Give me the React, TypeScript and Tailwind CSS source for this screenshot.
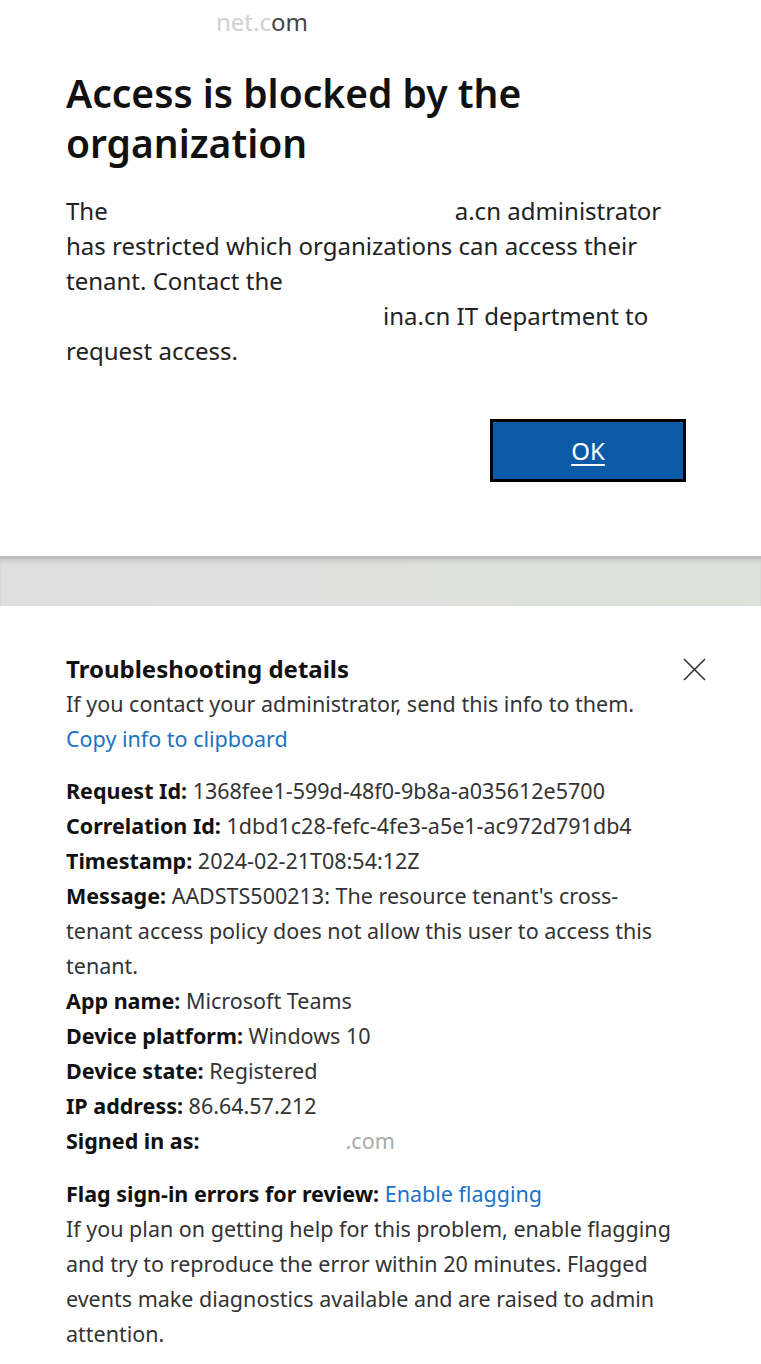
function Redacted({ w }: { w: number }) {
  return <span className="inline-block h-[1em] align-middle" style={{ width: w }} />;
}

function Row({ label, children }: { label: string; children: React.ReactNode }) {
  return (
    <div className="whitespace-nowrap">
      <span className="font-bold text-[#111]">{label}</span> <span className="text-[#333]">{children}</span>
    </div>
  );
}

export default function App() {
  return (
    <div className="w-[761px] min-h-[1364px] bg-white font-['Noto_Sans',sans-serif] text-[#1b1b1b]">
      <section className="h-[556px] px-[66px] pt-[6px]">
        <div className="text-[24px] leading-[32px] text-[#444]">
          <Redacted w={150} />
          <span className="text-[#d0d0d0]">net.c</span>
          <span>om</span>
        </div>
        <h1 className="mt-[30px] text-[39px] leading-[50px] font-semibold text-[#111]">
          <div>Access is blocked by the</div>
          <div>organization</div>
        </h1>
        <div className="mt-[25px] whitespace-nowrap text-[24px] leading-[35px] text-[#222]">
          <div className="flex">
            <span>The</span>
            <Redacted w={347} />
            <span>a.cn administrator</span>
          </div>
          <div>has restricted which organizations can access their</div>
          <div>tenant. Contact the</div>
          <div className="flex">
            <Redacted w={317} />
            <span>ina.cn IT department to</span>
          </div>
          <div>request access.</div>
        </div>
        <div className="mt-[51px] flex justify-end pr-[9px]">
          <button className="flex h-[63px] w-[196px] items-center justify-center border-[3px] border-black bg-[#0b5aa8] text-[24px] text-white underline underline-offset-4">
            OK
          </button>
        </div>
      </section>

      <div className="h-[50px] border-t-[3px] border-[#bdbdbd] bg-gradient-to-r from-[#dedede] via-[#dfe0de] to-[#dce3da] shadow-[inset_0_3px_3px_rgba(0,0,0,0.08)]" />

      <section className="relative px-[66px] pt-[45px] pb-[20px] text-[21.5px] leading-[35px]">
        <button className="absolute right-[55px] top-[52px] text-[#333]">
          <svg width="23" height="23" viewBox="0 0 23 23" fill="none" stroke="currentColor" strokeWidth="1.6">
            <path d="M1 1L22 22M22 1L1 22" />
          </svg>
        </button>
        <h2 className="text-[24px] font-bold text-[#111]">Troubleshooting details</h2>
        <div className="text-[#333]">If you contact your administrator, send this info to them.</div>
        <div className="text-[#1a73c6]">Copy info to clipboard</div>

        <div className="mt-[17px]">
          <Row label="Request Id:">1368fee1-599d-48f0-9b8a-a035612e5700</Row>
          <Row label="Correlation Id:">1dbd1c28-fefc-4fe3-a5e1-ac972d791db4</Row>
          <Row label="Timestamp:">2024-02-21T08:54:12Z</Row>
          <Row label="Message:">AADSTS500213: The resource tenant's cross-</Row>
          <div className="text-[#333]">tenant access policy does not allow this user to access this</div>
          <div className="text-[#333]">tenant.</div>
          <Row label="App name:">Microsoft Teams</Row>
          <Row label="Device platform:">Windows 10</Row>
          <Row label="Device state:">Registered</Row>
          <Row label="IP address:">86.64.57.212</Row>
          <div className="flex whitespace-nowrap">
            <span className="font-bold text-[#111]">Signed in as:</span>
            <Redacted w={146} />
            <span className="text-[#aaa]">.com</span>
          </div>
        </div>

        <div className="mt-[18px] whitespace-nowrap">
          <Row label="Flag sign-in errors for review:">
            <span className="text-[#1a73c6]">Enable flagging</span>
          </Row>
          <div className="text-[#333]">
            <div>If you plan on getting help for this problem, enable flagging</div>
            <div>and try to reproduce the error within 20 minutes. Flagged</div>
            <div>events make diagnostics available and are raised to admin</div>
            <div>attention.</div>
          </div>
        </div>
      </section>
    </div>
  );
}
